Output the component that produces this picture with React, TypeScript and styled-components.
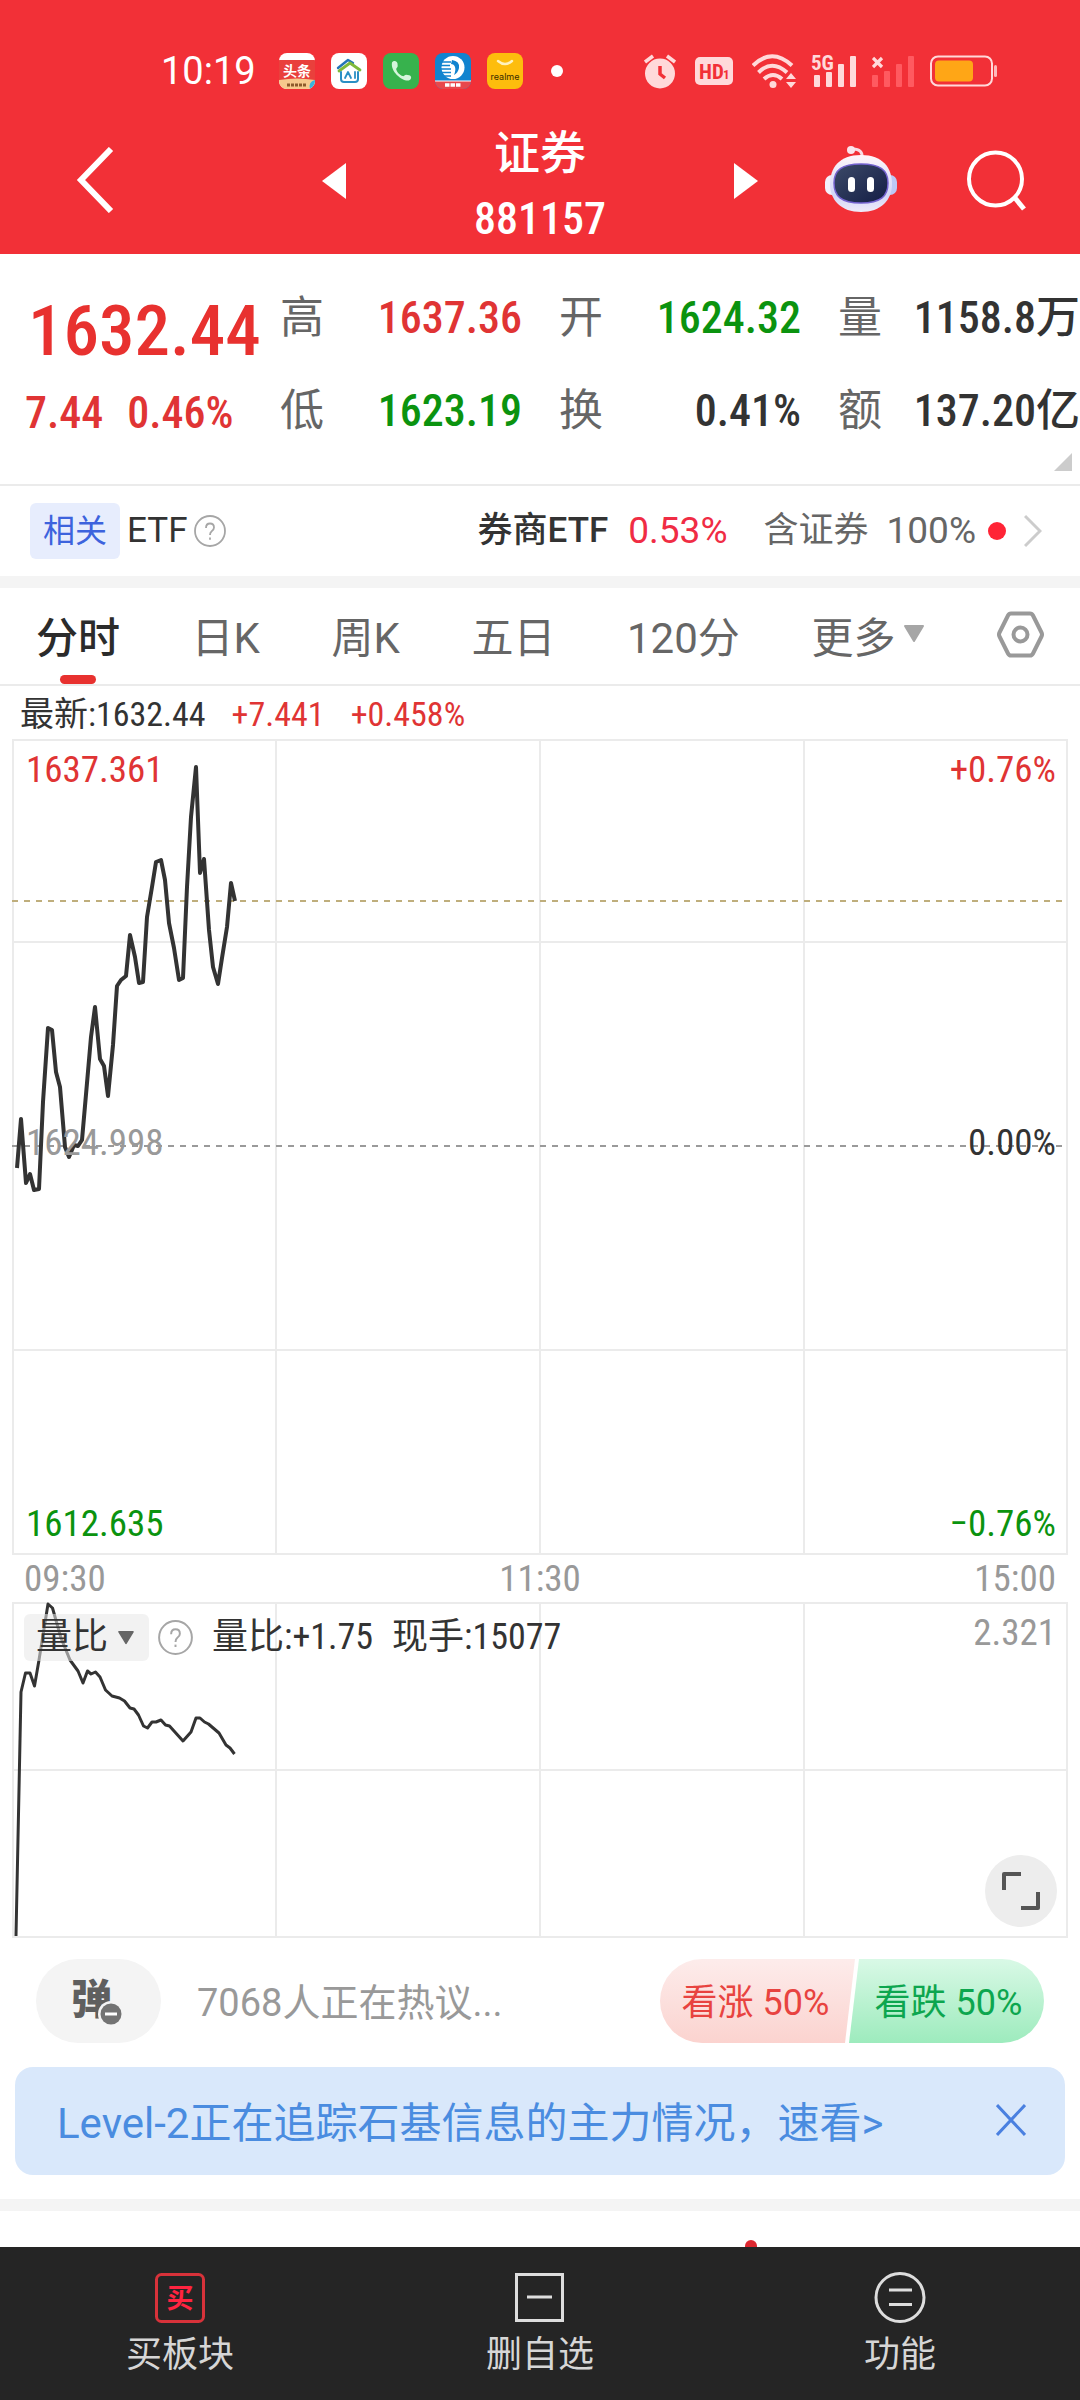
import React from 'react';
import styled, { createGlobalStyle } from 'styled-components';

const TEXT = "Roboto, 'Noto Sans CJK SC', sans-serif";
const NUM = "'Roboto Condensed', Roboto, 'Noto Sans CJK SC', sans-serif";

const color = {
  brand: '#f23037',
  up: '#e03434',
  down: '#0b930f',
  ink: '#333333',
  sub: '#666666',
  mute: '#999999',
  line: '#ebebeb',
  band: '#f4f4f4',
};

const Global = createGlobalStyle`
  *, *::before, *::after { box-sizing: border-box; }
  body { margin: 0; background: #fff; color: ${color.ink}; font-family: ${TEXT}; }
  button, select { font: inherit; color: inherit; border: 0; background: none; padding: 0; margin: 0; }
  a { color: inherit; text-decoration: none; }
  p, h1, dl, dt, dd { margin: 0; font-weight: inherit; }
  svg { display: block; flex: none; }
`;

const Screen = styled.div`
  min-height: 100vh;
  display: flex;
  flex-direction: column;
  white-space: nowrap;
`;

/* ---------- header ---------- */

const Header = styled.header`
  padding-top: 36px;
  background: ${color.brand};
  color: #fff;
`;

const StatusBar = styled.div`
  height: 70px;
  padding: 0 83px 0 161px;
  display: flex;
  align-items: center;
  justify-content: space-between;
`;

const StatusGroup = styled.div<{ $gap: number }>`
  display: flex;
  align-items: center;
  gap: ${(p) => p.$gap}px;
`;

const Clock = styled.time`
  margin-right: 7px;
  font-size: 38px;
  line-height: 48px;
`;

const NoticeDot = styled.i`
  width: 12px;
  height: 12px;
  margin-left: 12px;
  border-radius: 50%;
  background: #fff;
`;

const HdBadge = styled.span`
  margin: 0 4px;
`;

const TitleBar = styled.div`
  height: 148px;
  display: grid;
  grid-template-columns: 1fr auto 1fr;
  align-items: center;
`;

const TitleSide = styled.div<{ $end?: boolean }>`
  display: flex;
  align-items: center;
  justify-content: ${(p) => (p.$end ? 'flex-end' : 'flex-start')};
  gap: 70px;
  padding: ${(p) => (p.$end ? '0 54px 0 0' : '0 0 0 76px')};
`;

const Switcher = styled.div`
  width: 436px;
  display: flex;
  align-items: center;
  justify-content: space-between;
`;

const TitleText = styled.h1`
  padding-top: 12px;
  display: flex;
  flex-direction: column;
  align-items: center;
  font-weight: 500;
`;

const TitleName = styled.span`
  font-size: 46px;
  line-height: 66px;
`;

const TitleCode = styled.span`
  font-family: ${NUM};
  font-size: 44px;
  line-height: 66px;
`;

/* ---------- quote ---------- */

const Quote = styled.section`
  position: relative;
  padding-bottom: 31px;
  display: grid;
  grid-template-columns: 280px 1fr;
  border-bottom: 2px solid ${color.line};
  font-family: ${NUM};
  font-weight: 500;
`;

const Price = styled.div`
  padding: 35px 0 0 25px;
  color: ${color.up};
`;

const PriceNow = styled.p`
  padding-left: 3px;
  font-size: 71px;
  line-height: 84px;
  color: #e8312f;
`;

const PriceMove = styled.p`
  display: flex;
  gap: 24px;
  font-size: 44px;
  line-height: 80px;
`;

const Stats = styled.dl`
  padding-top: 34px;
  display: grid;
  grid-template-columns: repeat(3, minmax(0, 1fr));
  align-content: start;
  gap: 33px 37px;
`;

const Stat = styled.div`
  display: flex;
  align-items: center;
  justify-content: space-between;
  font-size: 44px;
  line-height: 60px;

  dt {
    color: ${color.sub};
    font-weight: 400;
  }
`;

const StatValue = styled.dd<{ $tone: string }>`
  color: ${(p) => p.$tone};
`;

const Corner = styled.i`
  position: absolute;
  right: 8px;
  bottom: 13px;
  border-left: 18px solid transparent;
  border-bottom: 18px solid #cccccc;
`;

/* ---------- related fund ---------- */

const Related = styled.section`
  height: 90px;
  padding: 0 38px 0 30px;
  display: flex;
  align-items: center;
  justify-content: space-between;
  font-size: 35px;
  line-height: 56px;
`;

const RelatedLeft = styled.div`
  display: flex;
  align-items: center;
  gap: 7px;
`;

const Tag = styled.span`
  padding: 0 13px;
  border-radius: 6px;
  background: #e7edfd;
  color: #3d63dd;
  font-size: 32px;
`;

const RelatedLink = styled.a`
  display: flex;
  align-items: center;
`;

const FundName = styled.span`
  font-weight: 500;
`;

const FundChange = styled.span`
  margin: 0 36px 0 20px;
  font-size: 37px;
  color: #f02c44;
`;

const FundShare = styled.span`
  color: ${color.sub};
`;

const SharePercent = styled.span`
  margin: 0 12px 0 18px;
  font-size: 37px;
  color: ${color.sub};
`;

const RedDot = styled.i`
  width: 18px;
  height: 18px;
  margin-right: 18px;
  border-radius: 50%;
  background: #ff2436;
`;

const Band = styled.div`
  height: 12px;
  background: ${color.band};
`;

/* ---------- period tabs ---------- */

const Tabs = styled.nav`
  height: 98px;
  padding: 0 36px;
  display: flex;
  align-items: stretch;
  justify-content: space-between;
  border-bottom: 2px solid ${color.line};
`;

const Tab = styled.button<{ $active?: boolean }>`
  position: relative;
  padding-bottom: 4px;
  display: flex;
  align-items: center;
  gap: 8px;
  font-size: 42px;
  font-weight: ${(p) => (p.$active ? 500 : 400)};
  color: ${(p) => (p.$active ? '#2b2b2b' : color.sub)};

  &::after {
    content: '';
    display: ${(p) => (p.$active ? 'block' : 'none')};
    position: absolute;
    left: 50%;
    bottom: 0;
    width: 36px;
    height: 9px;
    margin-left: -18px;
    border-radius: 5px;
    background: #e8312f;
  }
`;

/* ---------- charts ---------- */

const Latest = styled.p`
  padding: 3px 20px 0;
  display: flex;
  gap: 26px;
  font-family: ${NUM};
  font-size: 34px;
  line-height: 50px;
`;

const Up = styled.span`
  color: ${color.up};
`;

const Plot = styled.div`
  position: relative;
  margin: 0 12px;

  > svg {
    width: 100%;
  }
`;

const Scale = styled.span<{ $right?: boolean; $top: number; $tone: string }>`
  position: absolute;
  top: ${(p) => p.$top}px;
  ${(p) => (p.$right ? 'right: 12px;' : 'left: 14px;')}
  font-family: ${NUM};
  font-size: 37px;
  line-height: 40px;
  color: ${(p) => p.$tone};
`;

const TimeAxis = styled.div`
  padding: 0 24px;
  display: flex;
  justify-content: space-between;
  font-family: ${NUM};
  font-size: 37px;
  line-height: 47px;
  color: ${color.mute};
`;

const Legend = styled.div`
  position: absolute;
  top: 12px;
  left: 12px;
  display: flex;
  align-items: center;
  font-family: ${NUM};
  font-size: 36px;
  line-height: 47px;
`;

const Picker = styled.label`
  display: flex;
  align-items: center;
  height: 47px;
  padding-right: 14px;
  margin-right: 9px;
  border-radius: 6px;
  background: rgba(231, 231, 231, 0.55);

  select {
    width: 93px;
    padding-left: 12px;
    appearance: none;
    line-height: 47px;
  }
`;

const LegendText = styled.span`
  margin-left: 19px;
`;

const Expand = styled.button`
  position: absolute;
  right: 11px;
  bottom: 11px;
  width: 72px;
  height: 72px;
  display: grid;
  place-items: center;
  border-radius: 50%;
  background: #ededed;
`;

/* ---------- discussion ---------- */

const Discuss = styled.section`
  padding: 21px 36px 24px;
  display: flex;
  align-items: center;
`;

const Bullet = styled.button`
  width: 125px;
  height: 84px;
  margin-right: 36px;
  display: grid;
  place-items: center;
  border-radius: 42px;
  background: ${color.band};
`;

const Hot = styled.a`
  flex: 1;
  padding-top: 4px;
  font-size: 38px;
  line-height: 56px;
  color: ${color.mute};
`;

const Vote = styled.button<{ $bull?: boolean }>`
  width: 195px;
  height: 84px;
  margin-left: ${(p) => (p.$bull ? 0 : -6)}px;
  padding: ${(p) => (p.$bull ? '0 4px 4px 0' : '0 0 4px 4px')};
  font-size: 36px;
  color: ${(p) => (p.$bull ? '#e84340' : '#0da64f')};
  background: ${(p) =>
    p.$bull ? 'linear-gradient(#fdeceb, #fbd3cf)' : 'linear-gradient(#d9f9e6, #9debbd)'};
  border-radius: ${(p) => (p.$bull ? '42px 0 0 42px' : '0 42px 42px 0')};
  clip-path: ${(p) =>
    p.$bull
      ? 'polygon(0 0, 100% 0, calc(100% - 10px) 100%, 0 100%)'
      : 'polygon(10px 0, 100% 0, 100% 100%, 0 100%)'};
`;

const Banner = styled.aside`
  height: 108px;
  margin: 0 15px 24px;
  padding: 0 39px 3px 42px;
  display: flex;
  align-items: center;
  justify-content: space-between;
  border-radius: 18px;
  background: #d9e8fb;
  color: #4a8ce0;
  font-size: 42px;
`;

const Peek = styled.section`
  position: relative;
  flex: 1;
  min-height: 36px;
  overflow: hidden;
`;

const PeekDot = styled.i`
  position: absolute;
  top: 29px;
  left: 69%;
  width: 12px;
  height: 12px;
  border-radius: 50%;
  background: #dd2830;
`;

/* ---------- bottom bar ---------- */

const BottomBar = styled.nav`
  position: sticky;
  bottom: 0;
  height: 153px;
  display: grid;
  grid-template-columns: repeat(3, 1fr);
  background: #252525;
  color: #d6d6d6;
`;

const BottomItem = styled.button`
  padding-top: 24px;
  display: flex;
  flex-direction: column;
  align-items: center;
  gap: 4px;
  font-size: 36px;
  line-height: 56px;
`;

/* ---------- icons ---------- */

const AppToutiao = () => (
  <svg width="36" height="36" viewBox="0 0 36 36">
    <defs><clipPath id="tt"><rect width="36" height="36" rx="8" /></clipPath></defs>
    <g clipPath="url(#tt)">
      <rect width="36" height="36" fill="#fff" />
      <rect y="7" width="36" height="20" fill="#e9403c" />
      <path d="M0 27q18-3 36 0v9H0z" fill="#f6c98d" />
      <path d="M31 36q-2-7 5-9v9z" fill="#39b5dd" />
      <path d="M8 32h20" stroke="#8d5a2c" strokeWidth="3" strokeDasharray="3 1" />
      <text x="18" y="23" textAnchor="middle" fontSize="14" fontWeight="700" fill="#fff" fontFamily="Noto Sans CJK SC">头条</text>
    </g>
  </svg>
);

const AppHome = () => (
  <svg width="36" height="36" viewBox="0 0 36 36">
    <rect width="36" height="36" rx="8" fill="#fff" />
    <g fill="none" strokeLinecap="round" strokeLinejoin="round">
      <path d="M7 15l10-8 5 3" stroke="#2474b8" strokeWidth="2.4" />
      <path d="M8 18l11-8 10 7" stroke="#7fb93b" strokeWidth="2.8" />
      <path d="M10 19v7q0 3 3 3h11q3 0 3-3v-7" stroke="#2a8fc4" strokeWidth="2" />
      <path d="M14 25l3-6 3 6M24 19v6" stroke="#2a8fc4" strokeWidth="1.8" />
    </g>
  </svg>
);

const AppPhone = () => (
  <svg width="36" height="36" viewBox="0 0 36 36">
    <rect width="36" height="36" rx="8" fill="#37b24d" />
    <path d="M9 9.5c2-2.5 5-1.500 5.500 1l.2 2.500c0 1.500-1.700 2-1.500 3.200.7 3 3.600 6 6.600 6.900 1.200.3 1.800-1.300 3.300-1.300l3 .5c2.500.7 2.700 3.300.6 4.800-5 3-19.700-7.500-17.700-17.600z" fill="#d5f5dc" />
  </svg>
);

const AppNews = () => (
  <svg width="36" height="36" viewBox="0 0 36 36">
    <defs><clipPath id="nw"><rect width="36" height="36" rx="8" /></clipPath></defs>
    <g clipPath="url(#nw)">
      <rect width="36" height="36" fill="#1183cf" />
      <circle cx="18" cy="14.500" r="11.500" fill="#fff" />
      <path d="M17 7q8 1 7 8-1 5-5 7 2-5 1-8t-4-3z" fill="#1183cf" />
      <path d="M6 9h10M5 12.500h10M5 16h11M7 19.500h9M9 23h7" stroke="#1183cf" strokeWidth="1.300" />
      <rect y="28" width="36" height="8" fill="#e8474c" />
      <path d="M0 28h36" stroke="#fff" />
      <path d="M10 32h16" stroke="#fff" strokeWidth="3.500" strokeDasharray="4.500 1" />
    </g>
  </svg>
);

const AppRealme = () => (
  <svg width="36" height="36" viewBox="0 0 36 36">
    <rect width="36" height="36" rx="8" fill="#fdbd0d" />
    <path d="M11 8q7 6 14 0" fill="none" stroke="#fff2bd" strokeWidth="2.500" strokeLinecap="round" />
    <text x="18" y="27" textAnchor="middle" fontSize="9" fill="#3a2c00" fontFamily="Inter">realme</text>
  </svg>
);

const Alarm = () => (
  <svg width="32" height="36" viewBox="0 0 32 36" fill="none" stroke="#ffd9da">
    <circle cx="16" cy="20.500" r="15" fill="#ffd9da" stroke="none" />
    <path d="M1 9l8-6M31 9l-8-6" strokeWidth="3.500" />
    <path d="M16 13v8l5 4" stroke={color.brand} strokeWidth="3.500" />
  </svg>
);

const Hd = () => (
  <svg width="38" height="28" viewBox="0 0 38 28">
    <rect width="38" height="28" rx="5" fill="#ffd9da" />
    <text x="4" y="21.500" fontSize="21" fontWeight="700" fill={color.brand} fontFamily="Roboto Condensed">HD</text>
    <text x="28" y="22" fontSize="13" fontWeight="700" fill={color.brand} fontFamily="Roboto Condensed">1</text>
  </svg>
);

const Wifi = () => (
  <svg width="44" height="36" viewBox="0 0 44 36" fill="none" stroke="#ffd9da" strokeWidth="4">
    <path d="M1 12.500Q20-6 40 12.500M6.500 19.500Q20 6 35 19.500M12 26q9-8 18 0" />
    <circle cx="21" cy="31.500" r="3.500" fill="#ffd9da" stroke="none" />
    <path d="M34 26l5-6 5 6zM34 29l5 6 5-6z" fill="#ffd9da" stroke="none" />
  </svg>
);

const Signal = () => (
  <svg width="46" height="42" viewBox="0 -3 46 42" fill="#ffd9da">
    <text x="0" y="17" fontSize="21" fontWeight="700" fontFamily="Roboto Condensed">5G</text>
    <rect x="3" y="22" width="6" height="12" rx="1" />
    <rect x="15" y="19" width="6" height="15" rx="1" />
    <rect x="27" y="11" width="6" height="23" rx="1" />
    <rect x="39" y="3" width="6" height="31" rx="1" />
  </svg>
);

const NoSignal = () => (
  <svg width="43" height="36" viewBox="0 0 43 36">
    <path d="M1 5l9 9M10 5l-9 9" stroke="#ffd9da" strokeWidth="3.200" />
    <g fill="#ff5a60">
      <rect y="22" width="6" height="12" rx="1" />
      <rect x="12" y="18" width="6" height="16" rx="1" />
      <rect x="24" y="11" width="6" height="23" rx="1" />
      <rect x="36" y="3" width="6" height="31" rx="1" />
    </g>
  </svg>
);

const Battery = () => (
  <svg width="67" height="32" viewBox="0 0 67 32">
    <rect x="1" y="1.500" width="61" height="29" rx="7" fill="none" stroke="#ffd9da" strokeWidth="2" />
    <rect x="5" y="5.500" width="38" height="21" rx="4" fill="#ffa616" />
    <rect x="64" y="10" width="3" height="12" rx="1.500" fill="#ffb9bb" />
  </svg>
);

const Back = () => (
  <svg width="38" height="66" viewBox="0 0 38 66" fill="none" stroke="#fff" strokeWidth="6">
    <path d="M35 2L5 33l30 31" />
  </svg>
);

const Triangle = ({ flip }: { flip?: boolean }) => (
  <svg width="24" height="38" viewBox="0 -2 24 38" fill="#fff">
    <path d={flip ? 'M0 0l24 18L0 36z' : 'M24 0L0 18l24 18z'} />
  </svg>
);

const Robot = () => (
  <svg width="72" height="68" viewBox="0 0 72 68">
    <defs>
      <linearGradient id="shell" x1="0" y1="0" x2="0" y2="1">
        <stop offset="0" stopColor="#fff6fa" />
        <stop offset="0.700" stopColor="#d3d6f8" />
        <stop offset="1" stopColor="#efeaf9" />
      </linearGradient>
      <linearGradient id="face" x1="0" y1="0" x2="1" y2="1">
        <stop offset="0" stopColor="#3c4a68" />
        <stop offset="1" stopColor="#141d45" />
      </linearGradient>
    </defs>
    <path d="M37 12q1-9-9-9" fill="none" stroke="#f9dbe4" strokeWidth="3" />
    <circle cx="26" cy="4" r="4" fill="#fbe4ec" />
    <rect y="29" width="16" height="20" rx="7" fill="#f3f0fb" />
    <rect x="56" y="29" width="16" height="20" rx="7" fill="#bcc8f6" />
    <path d="M36 9c22 0 31 13 31 29S56 66 36 66 5 54 5 38 14 9 36 9z" fill="url(#shell)" />
    <path d="M36 18c19 0 27 6 27 19s-7 20-27 20S9 50 9 37s8-19 27-19z" fill="url(#face)" stroke="#7462cf" strokeWidth="1.500" />
    <rect x="23" y="31" width="7" height="15" rx="3.500" fill="#fff" />
    <rect x="42" y="31" width="7" height="15" rx="3.500" fill="#fff" />
  </svg>
);

const Search = () => (
  <svg width="59" height="62" viewBox="0 0 59 62" fill="none" stroke="#fff" strokeWidth="4">
    <circle cx="28.500" cy="30" r="26.500" />
    <path d="M48 49l9 11" strokeWidth="5" />
  </svg>
);

const Help = ({ size }: { size: number }) => (
  <svg width={size} height={size} viewBox="0 0 32 32" fill="none" stroke="#a6a6a6" strokeWidth="1.800">
    <circle cx="16" cy="16" r="15" />
    <path d="M12 13q0-4.500 4-4.500t4 4q0 2.200-2.300 3.700Q16 17.500 16 20" />
    <path d="M16 22.500v2.200" />
  </svg>
);

const Chevron = () => (
  <svg width="18" height="34" viewBox="0 0 18 34" fill="none" stroke="#cccccc" strokeWidth="3">
    <path d="M1 2l15 15L1 32" />
  </svg>
);

const Caret = ({ width, fill }: { width: number; fill: string }) => (
  <svg width={width} height={width - 4} viewBox="0 0 22 18">
    <path d="M2 1h18l-9 15z" fill={fill} stroke={fill} strokeWidth="2" strokeLinejoin="round" />
  </svg>
);

const Hexagon = () => (
  <svg width="47" height="47" viewBox="0 0 47 47" fill="none" stroke="#999999" strokeWidth="4" strokeLinejoin="round">
    <path d="M14 2.500h19q2 0 3 2l8.500 17q1 2 0 4L36 42.500q-1 2-3 2H14q-2 0-3-2l-8.500-17q-1-2 0-4L11 4.500q1-2 3-2z" />
    <circle cx="23.500" cy="23.500" r="7" />
  </svg>
);

const Corners = () => (
  <svg width="38" height="38" viewBox="0 0 38 38" fill="none" stroke="#555" strokeWidth="4" strokeLinejoin="round">
    <path d="M2 18V2h17M19 36h17V20" />
  </svg>
);

const BulletIcon = () => (
  <svg width="56" height="72" viewBox="0 -10 56 72">
    <text x="0" y="39" fontSize="41" fontWeight="900" fill="#5f5f5f" fontFamily="Noto Sans CJK SC">弹</text>
    <circle cx="40" cy="39" r="13" fill={color.band} />
    <circle cx="40" cy="39" r="10.500" fill="#737373" />
    <path d="M34 39h12" stroke="#fff" strokeWidth="3" />
  </svg>
);

const Close = () => (
  <svg width="30" height="32" viewBox="0 0 30 32" stroke="#4a80e0" strokeWidth="3">
    <path d="M1 1l28 30M29 1L1 31" />
  </svg>
);

const BuyIcon = () => (
  <svg width="52" height="52" viewBox="0 0 52 52">
    <rect x="2.500" y="3.500" width="47" height="47" rx="5" fill="none" stroke="#d8323a" strokeWidth="3" />
    <text x="26" y="36.500" textAnchor="middle" fontSize="27" fontWeight="700" fill="#ff2440" fontFamily="Noto Sans CJK SC">买</text>
  </svg>
);

const RemoveIcon = () => (
  <svg width="52" height="52" viewBox="0 0 52 52" fill="none" stroke="#dddddd" strokeWidth="3">
    <path d="M2.500 3.500h46v46h-46zM13 26h25" />
  </svg>
);

const MoreIcon = () => (
  <svg width="52" height="52" viewBox="0 0 52 52" fill="none" stroke="#dddddd" strokeWidth="3">
    <circle cx="26" cy="26.500" r="24" />
    <path d="M15 19h23M15 33.500h23" />
  </svg>
);

/* ---------- data ---------- */

const stats = [
  { label: '高', value: '1637.36', tone: color.up },
  { label: '开', value: '1624.32', tone: color.down },
  { label: '量', value: '1158.8万', tone: color.ink },
  { label: '低', value: '1623.19', tone: color.down },
  { label: '换', value: '0.41%', tone: color.ink },
  { label: '额', value: '137.20亿', tone: color.ink },
];

const pricePoints =
  '5,429 9,380 14,444 18,435 22,451 27,450 31,363 36,289 40,291 44,333 48,348 53,408 57,418 62,406 66,407 70,401 ' +
  '75,344 79,298 83,268 88,320 92,327 96,357 101,306 105,247 109,241 114,237 118,196 123,218 127,244 131,243 ' +
  '135,178 140,148 144,123 149,121 153,141 157,184 162,209 167,241 171,239 175,148 179,78 184,28 188,134 192,120 ' +
  '197,191 201,228 206,245 210,219 215,188 219,144 223,162';

const ratioPoints =
  '4,334 9,90 13.500,71 18,71 22.500,84 27,58 36,2 40.500,6 49,36 58,58 66,69 71,81 75.500,69 79,72 83.500,70 88,75 ' +
  '93.500,88 100,94 107.500,96 112.500,99 118,106 122,107 126.500,113 131.500,124 135.500,126 140,120 144,120 149,118 ' +
  '153.500,123 157.500,124 171,139 179,130 184,116 188,116 192.500,120 196.500,122 207,131 214,143 218,146 222.500,152';

const Grid = ({ height, rows }: { height: number; rows: number[] }) => (
  <g stroke={color.line} strokeWidth="2">
    {[1, 264, 528, 792, 1055].map((x) => (
      <path key={x} d={`M${x} 0V${height}`} />
    ))}
    {rows.map((y) => (
      <path key={y} d={`M0 ${y}H1056`} />
    ))}
  </g>
);

export default function App() {
  return (
    <Screen>
      <Global />
      <Header>
        <StatusBar>
          <StatusGroup $gap={16}>
            <Clock>10:19</Clock>
            <AppToutiao />
            <AppHome />
            <AppPhone />
            <AppNews />
            <AppRealme />
            <NoticeDot />
          </StatusGroup>
          <StatusGroup $gap={15}>
            <Alarm />
            <HdBadge><Hd /></HdBadge>
            <Wifi />
            <Signal />
            <NoSignal />
            <Battery />
          </StatusGroup>
        </StatusBar>
        <TitleBar>
          <TitleSide>
            <button aria-label="返回"><Back /></button>
          </TitleSide>
          <Switcher>
            <button aria-label="上一个"><Triangle /></button>
            <TitleText>
              <TitleName>证券</TitleName>
              <TitleCode>881157</TitleCode>
            </TitleText>
            <button aria-label="下一个"><Triangle flip /></button>
          </Switcher>
          <TitleSide $end>
            <button aria-label="智能助手"><Robot /></button>
            <button aria-label="搜索"><Search /></button>
          </TitleSide>
        </TitleBar>
      </Header>

      <Quote>
        <Price>
          <PriceNow>1632.44</PriceNow>
          <PriceMove><span>7.44</span><span>0.46%</span></PriceMove>
        </Price>
        <Stats>
          {stats.map((s) => (
            <Stat key={s.label}>
              <dt>{s.label}</dt>
              <StatValue $tone={s.tone}>{s.value}</StatValue>
            </Stat>
          ))}
        </Stats>
        <Corner />
      </Quote>

      <Related>
        <RelatedLeft>
          <Tag>相关</Tag>
          <span>ETF</span>
          <button aria-label="说明"><Help size={32} /></button>
        </RelatedLeft>
        <RelatedLink href="#etf">
          <FundName>券商ETF</FundName>
          <FundChange>0.53%</FundChange>
          <FundShare>含证券</FundShare>
          <SharePercent>100%</SharePercent>
          <RedDot />
          <Chevron />
        </RelatedLink>
      </Related>
      <Band />

      <Tabs>
        <Tab $active>分时</Tab>
        <Tab>日K</Tab>
        <Tab>周K</Tab>
        <Tab>五日</Tab>
        <Tab>120分</Tab>
        <Tab>更多<Caret width={22} fill="#a6a6a6" /></Tab>
        <Tab aria-label="设置"><Hexagon /></Tab>
      </Tabs>

      <Latest>
        <span>最新:1632.44</span>
        <Up>+7.441</Up>
        <Up>+0.458%</Up>
      </Latest>

      <Plot>
        <svg height="816" viewBox="0 0 1056 816" preserveAspectRatio="none">
          <Grid height={816} rows={[1, 203, 611, 815]} />
          <path d="M0 162H1056" stroke="#bfae7c" strokeWidth="2" strokeDasharray="6 6" />
          <path d="M0 407H1056" stroke="#9a9a9a" strokeWidth="2" strokeDasharray="6 6" />
          <polyline points={pricePoints} fill="none" stroke={color.ink} strokeWidth="4" strokeLinejoin="round" />
        </svg>
        <Scale $top={11} $tone={color.up}>1637.361</Scale>
        <Scale $top={11} $tone={color.up} $right>+0.76%</Scale>
        <Scale $top={384} $tone={color.mute}>1624.998</Scale>
        <Scale $top={384} $tone={color.ink} $right>0.00%</Scale>
        <Scale $top={765} $tone={color.down}>1612.635</Scale>
        <Scale $top={765} $tone={color.down} $right>−0.76%</Scale>
      </Plot>

      <TimeAxis>
        <span>09:30</span>
        <span>11:30</span>
        <span>15:00</span>
      </TimeAxis>

      <Plot>
        <svg height="336" viewBox="0 0 1056 336" preserveAspectRatio="none">
          <Grid height={336} rows={[1, 168, 335]} />
          <polyline points={ratioPoints} fill="none" stroke={color.ink} strokeWidth="3" strokeLinejoin="round" />
        </svg>
        <Legend>
          <Picker>
            <select aria-label="指标" defaultValue="量比">
              <option>量比</option>
            </select>
            <Caret width={18} fill="#666666" />
          </Picker>
          <button aria-label="指标说明"><Help size={35} /></button>
          <LegendText>量比:+1.75</LegendText>
          <LegendText>现手:15077</LegendText>
        </Legend>
        <Scale $top={11} $tone={color.mute} $right>2.321</Scale>
        <Expand aria-label="全屏"><Corners /></Expand>
      </Plot>

      <Discuss>
        <Bullet aria-label="弹幕"><BulletIcon /></Bullet>
        <Hot href="#discuss">7068人正在热议...</Hot>
        <Vote $bull>看涨 50%</Vote>
        <Vote>看跌 50%</Vote>
      </Discuss>

      <Banner>
        <a href="#level2">Level-2正在追踪石基信息的主力情况，速看&gt;</a>
        <button aria-label="关闭"><Close /></button>
      </Banner>
      <Band />
      <Peek><PeekDot /></Peek>

      <BottomBar>
        <BottomItem><BuyIcon />买板块</BottomItem>
        <BottomItem><RemoveIcon />删自选</BottomItem>
        <BottomItem><MoreIcon />功能</BottomItem>
      </BottomBar>
    </Screen>
  );
}
